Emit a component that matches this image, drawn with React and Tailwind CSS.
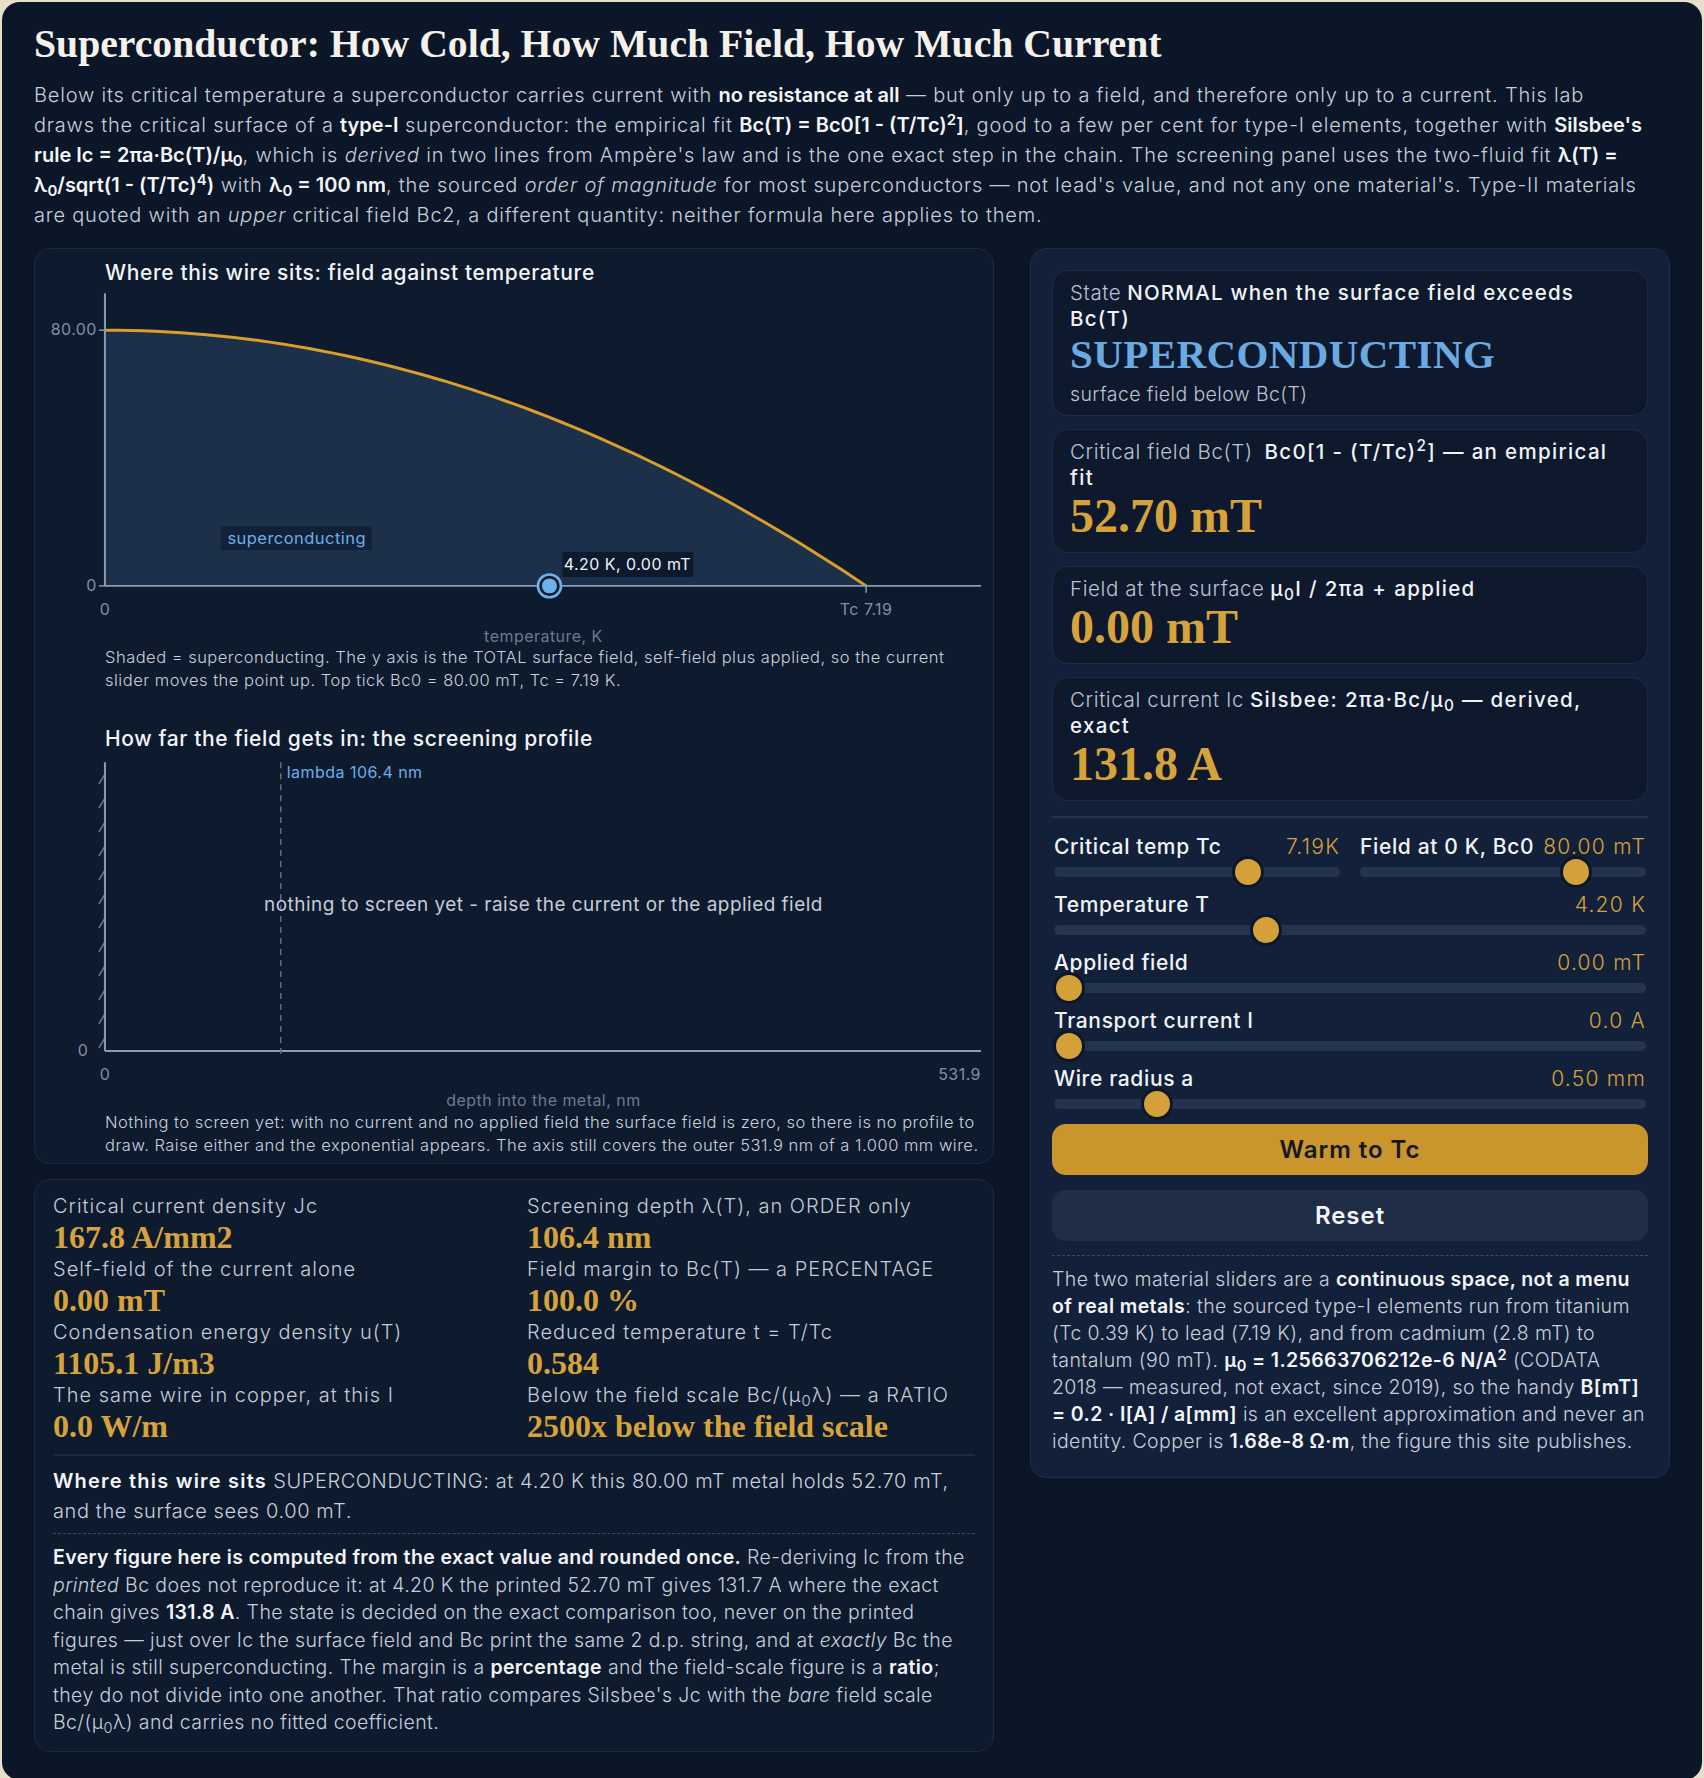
const gold = "text-[#d6a23c]";

const curvePts = Array.from({ length: 61 }, (_, i) => {
  const t = i / 60;
  return [70 + t * 762, 298 - (1 - t * t) * 256];
});
const curveD = curvePts.map(([x, y], i) => `${i ? "L" : "M"}${x.toFixed(1)} ${y.toFixed(1)}`).join(" ");
const fillD = `${curveD} L832 298 L70 298 Z`;

const svgFont = { fontFamily: "Inter, sans-serif", letterSpacing: "0.03em" };

function PhaseChart() {
  return (
    <svg viewBox="0 0 959 358" width="100%" height="358" style={svgFont}>
      <path d={fillD} fill="#1d3049" />
      <path d={curveD} fill="none" stroke="#d99e2b" strokeWidth="3" />
      <line x1="70" y1="5" x2="70" y2="298" stroke="#8a9bb3" strokeWidth="2" />
      <line x1="70" y1="298" x2="947" y2="298" stroke="#8a9bb3" strokeWidth="2" />
      <line x1="64" y1="42" x2="70" y2="42" stroke="#8a9bb3" strokeWidth="1.5" />
      <line x1="64" y1="298" x2="70" y2="298" stroke="#8a9bb3" strokeWidth="1.5" />
      <line x1="832" y1="298" x2="832" y2="305" stroke="#8a9bb3" strokeWidth="1.5" />
      <text x="62" y="47" textAnchor="end" fontSize="16" fill="#8190a6">80.00</text>
      <text x="62" y="303" textAnchor="end" fontSize="16" fill="#8190a6">0</text>
      <text x="70" y="327" textAnchor="middle" fontSize="16" fill="#8190a6">0</text>
      <text x="832" y="327" textAnchor="middle" fontSize="16" fill="#8190a6">Tc 7.19</text>
      <text x="509" y="354" textAnchor="middle" fontSize="16" fill="#6c7a90">temperature, K</text>
      <rect x="186" y="238" width="151" height="24" fill="#12213a" />
      <text x="262" y="256" textAnchor="middle" fontSize="16.5" fill="#6eaee6">superconducting</text>
      <rect x="528" y="264" width="131" height="25" fill="#0d192c" />
      <text x="593" y="282" textAnchor="middle" fontSize="16" fill="#eef2f7">4.20 K, 0.00 mT</text>
      <circle cx="515" cy="298" r="11.5" fill="#0f1b2f" stroke="#6eb0ea" strokeWidth="2.5" />
      <circle cx="515" cy="298" r="7.5" fill="#6eb0ea" />
    </svg>
  );
}

function ScreeningChart() {
  const hatches = Array.from({ length: 12 }, (_, i) => 30 + i * 24);
  return (
    <svg viewBox="0 0 959 357" width="100%" height="357" style={svgFont}>
      {hatches.map((y) => (
        <line key={y} x1="64" y1={y} x2="70" y2={y - 10} stroke="#6b7a90" strokeWidth="1.5" />
      ))}
      <line x1="70" y1="8" x2="70" y2="297" stroke="#8a9bb3" strokeWidth="2" />
      <line x1="70" y1="297" x2="947" y2="297" stroke="#8a9bb3" strokeWidth="2" />
      <line x1="246" y1="8" x2="246" y2="304" stroke="#5f6d82" strokeWidth="1.5" strokeDasharray="6 5" />
      <text x="252" y="24" fontSize="16" fill="#6eaee6">lambda 106.4 nm</text>
      <text x="509" y="157" textAnchor="middle" fontSize="19" fill="#c4ccd8">
        nothing to screen yet - raise the current or the applied field
      </text>
      <text x="48" y="302" textAnchor="middle" fontSize="16" fill="#8190a6">0</text>
      <text x="70" y="326" textAnchor="middle" fontSize="16" fill="#8190a6">0</text>
      <text x="947" y="326" textAnchor="end" fontSize="16" fill="#8190a6">531.9</text>
      <text x="509" y="352" textAnchor="middle" fontSize="16" fill="#6c7a90">depth into the metal, nm</text>
    </svg>
  );
}

function Readout({ label, formula, value }) {
  return (
    <div className="rounded-2xl border border-[#1e2c45] bg-[#0e192d] px-[17px] pt-[9px] pb-[11px]">
      <div className="text-[20.5px] leading-[26px]">
        <span className="font-light tracking-[0.03em] text-[#b9c3d1]">{label}</span>{" "}
        <span className="font-medium tracking-[0.065em] text-[#f0f3f7]">{formula}</span>
      </div>
      <div className={`font-['Liberation_Serif',serif] font-bold text-[48px] leading-[50px] tracking-normal ${gold}`}>
        {value}
      </div>
    </div>
  );
}

function Slider({ label, value, f }) {
  return (
    <div className="flex flex-col">
      <div className="flex items-baseline justify-between text-[21px] leading-[26px]">
        <span className="font-medium tracking-[0.03em] text-[#f0f3f7]">{label}</span>
        <span className={`font-light tracking-[0.06em] ${gold}`}>{value}</span>
      </div>
      <div className="relative mt-[7px] h-[10px] rounded-full bg-[#25344e]">
        <div
          className="absolute top-1/2 h-[32px] w-[32px] -translate-x-1/2 -translate-y-1/2 rounded-full border-[3px] border-[#0d1729] bg-[#d4a03a]"
          style={{ left: `calc(15px + ${f} * (100% - 30px))` }}
        />
      </div>
    </div>
  );
}

function Stat({ label, value }) {
  return (
    <div className="flex flex-col">
      <div className="text-[20px] leading-[27px] font-light tracking-[0.05em] text-[#c3ccd8]">{label}</div>
      <div className={`font-['Liberation_Serif',serif] font-bold text-[32px] leading-[34px] tracking-normal ${gold}`}>
        {value}
      </div>
    </div>
  );
}

const B = ({ children }) => <b className="font-semibold text-[#f3f5f9]">{children}</b>;
const Bt = ({ children }) => <b className="font-semibold tracking-[0.02em] text-[#f3f5f9]">{children}</b>;
const Bn = ({ children }) => <b className="font-semibold tracking-normal text-[#f3f5f9]">{children}</b>;

export default function App() {
  return (
    <div className="min-h-[1778px] bg-[#e6e0cb] p-[2px] font-['Inter',sans-serif]">
      <div className="rounded-[18px] bg-[#0b1628] px-[32px] pt-[19px] pb-[28px] text-[#c6cfdb]">
        <h1 className="font-['Liberation_Serif',serif] text-[39.7px] leading-[46px] font-bold text-[#f4f1ea]">
          Superconductor: How Cold, How Much Field, How Much Current
        </h1>
        <p className="mt-[13px] pr-[24px] text-[20px] leading-[30px] font-light tracking-[0.04em]">
          Below its critical temperature a superconductor carries current with <Bn>no resistance at all</Bn> — but only
          up to a field, and therefore only up to a current. This lab draws the critical surface of a <Bn>type-I</Bn>{" "}
          superconductor: the empirical fit <Bn>Bc(T) = Bc0[1 - (T/Tc)<sup>2</sup>]</Bn>, good to a few per cent for
          type-I elements, together with <Bn>Silsbee's rule Ic = 2πa·Bc(T)/μ<sub>0</sub></Bn>, which is <i>derived</i> in
          two lines from Ampère's law and is the one exact step in the chain. The screening panel uses the two-fluid fit{" "}
          <Bn>λ(T) = λ<sub>0</sub>/sqrt(1 - (T/Tc)<sup>4</sup>)</Bn> with <Bn>λ<sub>0</sub> = 100 nm</Bn>, the sourced{" "}
          <i>order of magnitude</i> for most superconductors — not lead's value, and not any one material's. Type-II
          materials are quoted with an <i>upper</i> critical field Bc2, a different quantity: neither formula here applies
          to them.
        </p>

        <div className="mt-[18px] grid grid-cols-[3fr_2fr] gap-[36px] items-start">
          {/* left column */}
          <div className="flex flex-col gap-[15px]">
            <div className="rounded-2xl border border-[#1c2a42] bg-[#0e1a2e] pt-[9px] pb-[6px]">
              <h3 className="ml-[70px] text-[21px] leading-[30px] font-medium tracking-[0.03em] text-[#f2f5f9]">
                Where this wire sits: field against temperature
              </h3>
              <PhaseChart />
              <p className="ml-[70px] mr-[13px] text-[16.5px] leading-[23px] font-light tracking-[0.03em] text-[#c9d1dc]">
                Shaded = superconducting. The y axis is the TOTAL surface field, self-field plus applied, so the current
                slider moves the point up. Top tick Bc0 = 80.00 mT, Tc = 7.19 K.
              </p>
              <h3 className="mt-[32px] ml-[70px] text-[21px] leading-[30px] font-medium tracking-[0.03em] text-[#f2f5f9]">
                How far the field gets in: the screening profile
              </h3>
              <ScreeningChart />
              <p className="ml-[70px] mr-[13px] text-[16.5px] leading-[23px] font-light tracking-[0.03em] text-[#c9d1dc]">
                Nothing to screen yet: with no current and no applied field the surface field is zero, so there is no
                profile to draw. Raise either and the exponential appears. The axis still covers the outer 531.9 nm of a
                1.000 mm wire.
              </p>
            </div>

            <div className="rounded-2xl border border-[#1c2a42] bg-[#0e1a2e] px-[18px] pt-[13px] pb-[14px]">
              <div className="grid grid-cols-2 gap-x-[26px] gap-y-[2px]">
                <Stat label="Critical current density Jc" value="167.8 A/mm2" />
                <Stat label="Screening depth λ(T), an ORDER only" value="106.4 nm" />
                <Stat label="Self-field of the current alone" value="0.00 mT" />
                <Stat label="Field margin to Bc(T) — a PERCENTAGE" value="100.0 %" />
                <Stat label="Condensation energy density u(T)" value="1105.1 J/m3" />
                <Stat label="Reduced temperature t = T/Tc" value="0.584" />
                <Stat label="The same wire in copper, at this I" value="0.0 W/m" />
                <Stat
                  label={
                    <>
                      Below the field scale Bc/(μ<sub>0</sub>λ) — a RATIO
                    </>
                  }
                  value="2500x below the field scale"
                />
              </div>
              <div className="mt-[11px] border-t-2 border-[#1c2a42] pt-[10px] text-[20px] leading-[30px] font-light tracking-[0.03em]">
                <span className="font-semibold tracking-[0.06em] text-[#f3f5f9]">Where this wire sits</span>{"  "}
                SUPERCONDUCTING: at 4.20 K this 80.00 mT metal holds 52.70 mT, and the surface sees 0.00 mT.
              </div>
              <div className="mt-[7px] border-t border-dashed border-[#3a4a63] pt-[10px] text-[19.5px] leading-[27.5px] font-light tracking-[0.02em]">
                <B>Every figure here is computed from the exact value and rounded once.</B> Re-deriving Ic from the{" "}
                <i>printed</i> Bc does not reproduce it: at 4.20 K the printed 52.70 mT gives 131.7 A where the exact chain
                gives <B>131.8 A</B>. The state is decided on the exact comparison too, never on the printed figures — just
                over Ic the surface field and Bc print the same 2 d.p. string, and at <i>exactly</i> Bc the metal is still
                superconducting. The margin is a <B>percentage</B> and the field-scale figure is a <B>ratio</B>; they do
                not divide into one another. That ratio compares Silsbee's Jc with the <i>bare</i> field scale Bc/(μ
                <sub>0</sub>λ) and carries no fitted coefficient.
              </div>
            </div>
          </div>

          {/* right column */}
          <div className="rounded-2xl border border-[#1e2c45] bg-[#132039] px-[21px] pt-[21px] pb-[22px]">
            <div className="flex flex-col gap-[13px]">
              <div className="rounded-2xl border border-[#1e2c45] bg-[#0e192d] px-[17px] pt-[9px] pb-[8px]">
                <div className="text-[20.5px] leading-[26px]">
                  <span className="font-light tracking-[0.03em] text-[#b9c3d1]">State</span>{" "}
                  <span className="font-medium tracking-[0.06em] text-[#f0f3f7]">
                    NORMAL when the surface field exceeds Bc(T)
                  </span>
                </div>
                <div className="font-['Liberation_Serif',serif] font-bold text-[41px] leading-[44px] tracking-[0.01em] text-[#6aaae2]">
                  SUPERCONDUCTING
                </div>
                <div className="mt-[5px] text-[19.5px] leading-[26px] font-light tracking-[0.02em] text-[#b9c3d1]">
                  surface field below Bc(T)
                </div>
              </div>
              <Readout
                label="Critical field Bc(T)"
                formula={
                  <span className="ml-[6px]">
                    Bc0[1 - (T/Tc)<sup>2</sup>] — an empirical fit
                  </span>
                }
                value="52.70 mT"
              />
              <Readout
                label="Field at the surface"
                formula={
                  <>
                    μ<sub>0</sub>I / 2πa + applied
                  </>
                }
                value="0.00 mT"
              />
              <Readout
                label="Critical current Ic"
                formula={
                  <>
                    Silsbee: 2πa·Bc/μ<sub>0</sub> — derived, exact
                  </>
                }
                value="131.8 A"
              />
            </div>

            <div className="mt-[15px] border-t-2 border-[#24324b] px-[2px] pt-[16px] flex flex-col gap-[15px]">
              <div className="grid grid-cols-2 gap-[20px]">
                <Slider label="Critical temp Tc" value="7.19K" f={0.7} />
                <Slider label="Field at 0 K, Bc0" value="80.00 mT" f={0.787} />
              </div>
              <Slider label="Temperature T" value="4.20 K" f={0.351} />
              <Slider label="Applied field" value="0.00 mT" f={0} />
              <Slider label="Transport current I" value="0.0 A" f={0} />
              <Slider label="Wire radius a" value="0.50 mm" f={0.156} />
            </div>

            <button className="mt-[15px] block h-[51px] w-full rounded-[14px] bg-[#c9952c] text-[24px] font-semibold tracking-[0.04em] text-[#15181f]">
              Warm to Tc
            </button>
            <button className="mt-[15px] block h-[51px] w-full rounded-[14px] bg-[#1f2d47] text-[24px] font-semibold tracking-[0.04em] text-[#f3f5f9]">
              Reset
            </button>

            <div className="mt-[14px] border-t border-dashed border-[#3a4a63] pt-[10px] text-[19.5px] leading-[27px] font-light tracking-[0.02em]">
              The two material sliders are a <Bt>continuous space, not a menu of real metals</Bt>: the sourced type-I
              elements run from titanium (Tc 0.39 K) to lead (7.19 K), and from cadmium (2.8 mT) to tantalum (90 mT).{" "}
              <B>
                μ<sub>0</sub> = 1.25663706212e-6 N/A<sup>2</sup>
              </B>{" "}
              (CODATA 2018 — measured, not exact, since 2019), so the handy <B>B[mT] = 0.2 · I[A] / a[mm]</B> is an
              excellent approximation and never an identity. Copper is <B>1.68e-8 Ω·m</B>, the figure this site
              publishes.
            </div>
          </div>
        </div>
      </div>
    </div>
  );
}
